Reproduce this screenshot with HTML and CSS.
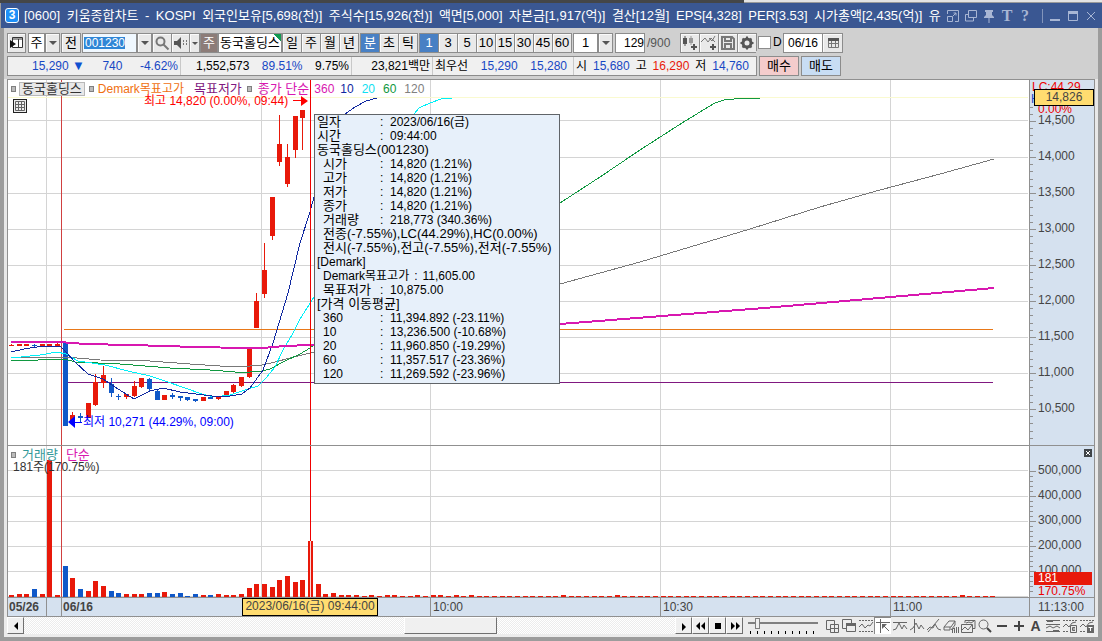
FILE: index.html
```html
<!DOCTYPE html>
<html lang="ko">
<head>
<meta charset="utf-8">
<title>[0600] 키움종합차트</title>
<link rel="stylesheet" href="styles.css">
</head>
<body>
<div class="backdrop"><i class="backdrop-dark"></i><i class="backdrop-light"></i></div>
<div class="window">
<header class="titlebar">
  <span class="app-badge">3</span>
  <h1 class="title"><span>[0600]</span><span>키움종합차트</span><span>-</span><span>KOSPI</span><span>외국인보유[5,698(천)]</span><span>주식수[15,926(천)]</span><span>액면[5,000]</span><span>자본금[1,917(억)]</span><span>결산[12월]</span><span>EPS[4,328]</span><span>PER[3.53]</span><span>시가총액[2,435(억)]</span><span>유</span></h1>
  <div class="win-tools">
    <button aria-label="화면 복귀"><svg viewBox="0 0 14 14"><path d="M1.500 5V1.500h11v11H9M1.500 7.500h5v5h-5zM7 7l3-3M7.500 4H10v2.500"/></svg></button>
    <button aria-label="화면 복사"><svg viewBox="0 0 14 14"><path d="M4.500 1.500h8v7h-8zM4 5.500H1.500v6.500h8V9"/></svg></button>
    <button aria-label="고정"><svg viewBox="0 0 14 14"><path class="fill" d="M3 1h8v2h-1v3l2 2v1H2V8l2-2V3H3zM6.500 9h1v5h-1z"/></svg></button>
    <button class="serif">T</button>
    <button class="serif">?</button>
    <i class="win-sep"></i>
    <button aria-label="최소화"><svg viewBox="0 0 14 14"><path class="fill" d="M2 10h10v2H2z"/></svg></button>
    <button aria-label="최대화"><svg viewBox="0 0 14 14"><path d="M2.500 3.500h9v8h-9z"/><path class="fill" d="M2 2h10v3H2z"/></svg></button>
    <button aria-label="닫기"><svg viewBox="0 0 14 14"><path d="M3 3l8 8M11 3l-8 8"/></svg></button>
  </div>
</header>

<nav class="toolbar">
  <button class="btn gap-r" aria-label="목록"><svg viewBox="0 0 18 18"><path class="sw" d="M4.500 3.500h10v10h-10zM4 5h11M10.500 5v9"/><path class="k" d="M2 6l6 4-6 4z"/></svg></button>
  <button class="field drop w17">주</button><button class="btn arrow w15" aria-label="종류 선택"></button>
  <button class="btn gap-x">전</button>
  <input class="field code" aria-label="종목코드" value="001230"><button class="btn arrow w15" aria-label="종목 목록"></button>
  <button class="btn" aria-label="검색"><svg viewBox="0 0 18 18"><circle class="g" cx="7.500" cy="7.500" r="4"/><path class="g" d="M10.500 10.500l5 5"/></svg></button>
  <button class="btn w18" aria-label="소리"><svg viewBox="0 0 18 18"><path class="dk" d="M2 7h3l4-4v12l-4-4H2z"/><path class="g dots" d="M11.500 6v6M14.500 6v6"/></svg></button><button class="btn arrow w11" aria-label="소리 옵션"></button>
  <span class="tag">주</span><span class="stock">동국홀딩스</span>
  <button class="btn">일</button><button class="btn">주</button><button class="btn">월</button><button class="btn w20">년</button>
  <button class="btn on gap-l">분</button><button class="btn">초</button><button class="btn w20">틱</button>
  <button class="btn on gap-l">1</button><button class="btn">3</button><button class="btn">5</button><button class="btn">10</button><button class="btn">15</button><button class="btn">30</button><button class="btn">45</button><button class="btn w20">60</button>
  <button class="field drop w25 gap-l">1</button><button class="btn arrow w15" aria-label="주기 선택"></button>
  <input class="field count" aria-label="조회 개수" value="129"><span class="total">/900</span>
  <button class="btn" aria-label="봉 추가"><svg viewBox="0 0 18 18"><path class="dk" d="M2 4h4v6H2zM3.500 2h1v10h-1zM12 10h2v2h2v2h-2v2h-2v-2h-2v-2h2z"/><path class="lt" d="M8 4h4v5H8zM9.500 2h1v9h-1z"/></svg></button>
  <button class="btn" aria-label="지표 추가"><svg viewBox="0 0 18 18"><path class="g thin" d="M1 8l4-4 3 4 3-4 4 4M9 4l3 3 3-5"/><path class="dk" d="M12 10h2v2h2v2h-2v2h-2v-2h-2v-2h2z"/></svg></button>
  <button class="btn" aria-label="저장"><svg viewBox="0 0 18 18"><path class="g" d="M3 3h10l2 2v10H3zM6 3v4h6V3M6 15v-5h6v5"/></svg></button>
  <button class="btn" aria-label="설정"><svg viewBox="0 0 18 18"><circle class="gear" cx="9" cy="9" r="4"/><path class="g teeth" d="M9 2.500v2M9 13.500v2M2.500 9h2M13.500 9h2M4.500 4.500l1.500 1.500M12 12l1.500 1.500M4.500 13.500L6 12M12 6l1.500-1.500"/></svg></button>
  <label class="check"><input type="checkbox">D</label>
  <input class="field date" aria-label="날짜" value="06/16"><button class="btn" aria-label="달력"><svg viewBox="0 0 18 18"><path class="g thin" d="M4.500 5.500h10v8h-10zM7.500 5v9M11.500 5v9M4 9.500h10"/><path class="dk" d="M4 4h11v3H4z"/></svg></button>
</nav>

<section class="quote-row">
  <div class="quote">
    <div class="cell c1"><span class="blue">15,290 <b class="down">▼</b></span><span class="blue">740</span><span class="blue">-4.62%</span></div>
    <div class="cell c2"><span>1,552,573</span><span class="blue">89.51%</span><span>9.75%</span></div>
    <div class="cell c3"><span>23,821백만</span></div>
    <div class="cell c4"><span>최우선</span><span class="blue">15,290</span><span class="blue">15,280</span></div>
    <div class="cell c5"><span>시</span><span class="blue">15,680</span><span>고</span><span class="red">16,290</span><span>저</span><span class="blue">14,760</span></div>
  </div>
  <button class="trade buy">매수</button>
  <button class="trade sell">매도</button>
</section>

<main class="chart">
  <section class="pane price">
    <svg id="price" viewBox="8 80 1021 365" preserveAspectRatio="none" aria-label="가격 차트"></svg>
    <div class="legend">
      <i class="mark"></i><span class="chip">동국홀딩스</span><i class="mark"></i>
      <span class="l-orange">Demark목표고가</span><span class="l-purple">목표저가</span><i class="mark"></i>
      <span class="l-magenta">종가 단순</span><span class="l-magenta w18">360</span><span class="l-navy">10</span><span class="l-cyan">20</span><span class="l-green">60</span><span class="l-gray">120</span>
    </div>
    <button class="grid-btn" aria-label="표 보기"><svg viewBox="0 0 12 12"><path d="M1.500 1.500h9v9h-9zM4.500 1v10M7.500 1v10M1 4.500h10M1 7.500h10"/></svg></button>
    <div class="note high">최고 14,820 (0.00%, 09:44)<svg viewBox="0 0 15 10"><path d="M0 4.500h10" stroke="#f00"/><path d="M8 0l7 5-7 5z" fill="#f00"/></svg></div>
    <div class="note low"><svg viewBox="0 0 14 12"><path d="M5 6.500h9" stroke="#00f"/><path d="M7 0v12L0 6z" fill="#00f"/></svg>최저 10,271 (44.29%, 09:00)</div>
    <div class="tip">
      <div class="pair"><span>일자</span><span>:</span><span>2023/06/16(금)</span></div>
      <div class="pair"><span>시간</span><span>:</span><span>09:44:00</span></div>
      <div class="wide">동국홀딩스(001230)</div>
      <div class="pair in"><span>시가</span><span>:</span><span>14,820 (1.21%)</span></div>
      <div class="pair in"><span>고가</span><span>:</span><span>14,820 (1.21%)</span></div>
      <div class="pair in"><span>저가</span><span>:</span><span>14,820 (1.21%)</span></div>
      <div class="pair in"><span>종가</span><span>:</span><span>14,820 (1.21%)</span></div>
      <div class="pair in"><span>거래량</span><span>:</span><span>218,773 (340.36%)</span></div>
      <div class="in wide">전종(-7.55%),LC(44.29%),HC(0.00%)</div>
      <div class="in wide">전시(-7.55%),전고(-7.55%),전저(-7.55%)</div>
      <div>[Demark]</div>
      <div class="in demark"><span>Demark목표고가</span><span>:</span><span>11,605.00</span></div>
      <div class="pair in"><span>목표저가</span><span>:</span><span>10,875.00</span></div>
      <div class="wide">[가격 이동평균]</div>
      <div class="pair num in"><span>360</span><span>:</span><span>11,394.892 (-23.11%)</span></div>
      <div class="pair num in"><span>10</span><span>:</span><span>13,236.500 (-10.68%)</span></div>
      <div class="pair num in"><span>20</span><span>:</span><span>11,960.850 (-19.29%)</span></div>
      <div class="pair num in"><span>60</span><span>:</span><span>11,357.517 (-23.36%)</span></div>
      <div class="pair num in"><span>120</span><span>:</span><span>11,269.592 (-23.96%)</span></div>
    </div>
  </section>
  <aside class="axis" id="price-axis">
    <span class="lc">LC:44.29</span><span class="hc">H</span><span class="pct">0.00%</span><span class="now">14,826</span>
  </aside>
  <section class="pane volume">
    <svg id="volume" viewBox="8 446 1021 151" preserveAspectRatio="none" aria-label="거래량 차트"></svg>
    <div class="legend"><i class="mark"></i><span class="l-teal">거래량</span><span class="l-magenta">단순</span></div>
    <div class="vol-now">181주(170.75%)</div>
  </section>
  <aside class="axis" id="volume-axis">
    <button class="pane-close" aria-label="닫기"><svg viewBox="0 0 8 8"><path d="M2 2l4 4M6 2L2 6"/></svg></button>
    <span class="vol-box">181</span><span class="vol-pct">170.75%</span>
  </aside>
  <div class="times" id="times"><span class="cursor-time">2023/06/16(금) 09:44:00</span></div>
  <div class="last-time">11:13:00</div>
</main>

<footer class="bottom">
  <button class="raised" aria-label="왼쪽으로"><svg viewBox="0 0 14 14"><path d="M9 3v8L5 7z"/></svg></button>
  <div class="track"><div class="thumb"></div></div>
  <button class="raised" aria-label="재생"><svg viewBox="0 0 14 14"><path d="M5 4v8l4-4z"/></svg></button>
  <button class="raised" aria-label="뒤로"><svg viewBox="0 0 14 14"><path d="M6 3v8L2 7zM11 3v8L7 7z"/></svg></button>
  <button class="raised" aria-label="정지"><svg viewBox="0 0 14 14"><path d="M4 4h6v6H4z"/></svg></button>
  <button class="raised" aria-label="앞으로"><svg viewBox="0 0 14 14"><path d="M3 3v8l4-4zM8 3v8l4-4z"/></svg></button>
  <input class="speed" type="range" min="0" max="9" value="1" aria-label="속도">
  <div class="tools">
    <button aria-label="창 추가"><svg viewBox="0 0 16 16"><path d="M6 11.500H2.500v-9h8V6M6.500 6.500h8v8h-8zM10.500 6v9M6 10.500h9"/></svg></button>
    <button aria-label="창 겹침"><svg viewBox="0 0 16 16"><path d="M5 10.500H1.500v-9h9V5M5.500 6.500h9v7h-9z"/><path class="f" d="M5 5h10v3H5z"/></svg></button>
    <button aria-label="추세"><svg viewBox="0 0 16 16"><path stroke-dasharray="2 1" d="M1 2.500h14M1 13.500h14"/><path d="M1 9l3-3 3 4 3-3 2 1 3-4"/></svg></button>
    <button class="active" aria-label="선택"><svg viewBox="0 0 16 16"><path d="M1 4.500h14M5.500 1v14M9 8l5 5"/><path class="f" d="M7 6h5l-5 5z"/></svg></button>
    <button aria-label="수평선"><svg viewBox="0 0 16 16"><path d="M1 4.500h14M1 12l3-1 3-6 3 6 2-4 3 4"/></svg></button>
    <button aria-label="수직선"><svg viewBox="0 0 16 16"><path d="M5.500 1v14M1 12l3-2 3-5 3 6 2-4 3 4"/></svg></button>
    <button aria-label="추세선"><svg viewBox="0 0 16 16"><path d="M2 14L13 1M1 12l3-3 3 1 2-4 3 5 3 1"/></svg></button>
    <button aria-label="모두 지우기"><svg viewBox="0 0 16 16"><path d="M1 9l5-6h6l-4 6zM1 9v3h6V9M8 12l4-5V3M9.500 15v-4l2-1v5M13.500 9v6M15.500 9v6"/></svg></button>
    <button aria-label="차트 복사"><svg viewBox="0 0 16 16"><path d="M5 5V2.500h10v8h-2M1.500 6.500h11v8h-11zM2 12l3-3 3 3 4-5M6 5l3-1 2 1 3-2"/></svg></button>
    <button aria-label="돋보기"><svg viewBox="0 0 16 16"><circle cx="6.500" cy="6.500" r="4.500"/><path class="w2" d="M10 10l4 4"/></svg></button>
    <button aria-label="축소"><svg viewBox="0 0 16 16"><path class="w2" d="M3 8h10"/></svg></button>
    <button aria-label="확대"><svg viewBox="0 0 16 16"><path class="w2" d="M3 8h10M8 3v10"/></svg></button>
    <button class="letter">A</button>
    <button aria-label="지표 목록"><svg viewBox="0 0 16 16"><path d="M1 2.500h14M1 6.500h14M1 13.500h14M1 10l4-2 3 2 4-2 3 2"/><path class="f" d="M2 2h6v2H2zM8 12h6v2H8z"/></svg></button>
    <button aria-label="지표 편집"><svg viewBox="0 0 16 16"><path stroke-dasharray="2 1" d="M1 2.500h14M1 13.500h6"/><path d="M1 9l3-3 3 3 3-4 4-1M8.500 7.500h6v7h-6zM13 9.500h-2.500v3H13M10.500 11H13"/></svg></button>
    <button aria-label="문자 도구"><svg viewBox="0 0 16 16"><path stroke-dasharray="2 1" d="M1 2.500h14M1 13.500h6"/><path d="M1 9l3-3 3 3 3-4 4-1"/><path class="f" d="M8 7h7v8H8z"/><path class="wh" d="M9.500 9.500h4M11.500 9v4"/></svg></button>
  </div>
</footer>
</div>
<script src="chart.js"></script>
</body>
</html>
```

FILE: styles.css
```css
* { box-sizing: border-box; }
body { margin: 0; font: 12px/14px "Liberation Sans", "Noto Sans CJK KR", sans-serif; color: #000; background: #d0d0d0; min-height: 100vh; display: flex; flex-direction: column; }
button, input { font: inherit; color: inherit; padding: 0; margin: 0; border-radius: 0; }
button { border: 0; background: none; display: flex; align-items: center; justify-content: center; }
svg { display: block; flex: none; }
.blue { color: #1747c4; }
.red { color: #e8190a; }
.backdrop { display: flex; height: 3px; }
.backdrop-dark { flex: 744; background: #444648; }
.backdrop-light { flex: 358; background: #e4e4e4; border-bottom: 1px solid #9a9a9a; }
.window { flex: 1; display: flex; flex-direction: column; border: solid #9c9c9c; border-width: 0 4px 4px; }

.titlebar { height: 25px; margin: 0 -4px 0 -3px; padding: 0 4px; background: #3a5792; display: flex; align-items: center; gap: 5px; color: #fff; }
.app-badge { flex: none; width: 14px; height: 15px; border: 1px solid #fff; border-radius: 3px; background: #1e90f8; font-weight: bold; line-height: 13px; text-align: center; }
.title { flex: 1; min-width: 0; margin: 0; display: flex; justify-content: space-between; overflow: hidden; font-size: 13px; line-height: 16px; font-weight: normal; white-space: nowrap; }
.win-tools { display: flex; flex: none; align-items: center; gap: 4px; color: #b8c4dc; }
.win-tools button { width: 14px; height: 16px; }
.win-tools svg { width: 14px; height: 14px; fill: none; stroke: #a8b6d4; }
.win-tools .fill { fill: #a8b6d4; stroke: none; }
.win-tools .serif { font: bold 16px/16px "Liberation Serif", serif; color: #a8b6d4; }
.win-sep { width: 1px; height: 14px; background: #8294bb; margin: 0 1px 0 6px; }

.toolbar { display: flex; height: 25px; padding: 5px 3px 0; font-size: 13px; }
.btn { flex: none; width: 19px; height: 20px; border: 1px solid #8c8c8c; border-right-width: 0; background: #e9e9e9; box-shadow: inset 1px 1px #fafafa; }
.btn svg { width: 18px; height: 18px; fill: none; }
.btn.on { background: #4880c4; color: #fff; box-shadow: none; }
.toolbar .w20 { width: 20px; border-right-width: 1px; }
.w18 { width: 18px; }
.w17 { width: 17px; }
.w15 { width: 15px; border-right-width: 1px; }
.w11 { width: 11px; border-right-width: 1px; }
.w25 { width: 25px; }
.gap-r { margin-right: 2px; border-right-width: 1px; }
.gap-l { margin-left: 1px; }
.gap-x { width: 20px; margin: 0 1px; border-right-width: 1px; }
.arrow::after { content: ""; border: 4px solid transparent; border-top-color: #555; border-bottom: 0; }
.w11.arrow::after { border-width: 3px 3px 0; }
.field { flex: none; height: 20px; border: 1px solid #8c8c8c; background: #fff; text-align: center; }
.code { width: 55px; padding: 0 2px; background: #f0f8ff linear-gradient(#2f86d6, #2f86d6) 1px 3px / 41px 12px no-repeat; color: #fff; text-align: left; font-size: 12px; }
.tag { flex: none; width: 18px; height: 20px; border: 1px solid #8c8c8c; background: #8c7c78; color: #fff; text-align: center; line-height: 18px; }
.stock { flex: none; width: 64px; height: 20px; padding-left: 1px; border: 1px solid #8c8c8c; background: #fff linear-gradient(45deg, transparent 50%, #109a50 50%) right top / 8px 8px no-repeat; line-height: 18px; white-space: nowrap; overflow: hidden; }
.count { width: 30px; margin-left: 2px; font-size: 12px; text-align: right; }
.total { width: 35px; color: #555; font-size: 12px; line-height: 20px; padding-left: 2px; }
.check { display: flex; align-items: center; gap: 2px; width: 27px; height: 18px; border-left: 1px solid #8c8c8c; padding-left: 1px; font-size: 12px; }
.check input { appearance: none; width: 13px; height: 13px; background: #fff; border: 1px solid #8c8c8c; }
.date { width: 40px; font-size: 12px; }
.date + .btn { width: 20px; border-left-width: 0; border-right-width: 1px; }
.sw { fill: #fff; stroke: #333; }
.k { fill: #111; }
.g { stroke: #777; stroke-width: 2; }
.g.thin { stroke-width: 1; }
.dots { stroke-dasharray: 2 1; stroke-width: 1; }
.dk { fill: #555; }
.lt { fill: #999; }
.gear { stroke: #555; stroke-width: 3; }
.teeth { stroke: #555; }

.quote-row { display: flex; gap: 2px; padding: 3px 3px 2px; height: 26px; }
.quote { display: flex; flex: none; width: 750px; border: 1px solid #8c8c8c; background: #f0f0f0; line-height: 18px; height: 20px; }
.cell { display: flex; justify-content: space-between; border-right: 1px solid #c8c8c8; padding: 0 2px; white-space: nowrap; }
.cell:last-child { border: 0; }
.c1 { width: 173px; padding-left: 24px; }
.c2 { width: 171px; padding-left: 15px; }
.c3 { width: 81px; justify-content: flex-end; }
.c4 { width: 141px; padding: 0 6px 0 2px; }
.c5 { width: 182px; padding-right: 7px; }
.down { font-size: 13px; color: #1050d0; }
.trade { flex: none; width: 40px; height: 20px; border: 1px solid #8c8c8c; font-size: 13px; }
.buy { background: #f4cccc; }
.sell { background: #c8ddf4; }

.chart { flex: 1; display: grid; grid-template: 366fr 152fr 20px / 1fr 66px; padding: 0 3px; background: #e8e8e8; color: #444; }
.pane, .axis, .times, .last-time { border-left: 1px solid #909090; position: relative; min-width: 0; min-height: 0; }
.price, #price-axis { border-top: 1px solid #909090; }
.axis, .last-time { background: #d5e1ef; border-right: 1px solid #909090; }
.pane { background: #fff; }
.pane > svg { width: 100%; height: 100%; position: absolute; left: 0; top: 0; }
.volume, #volume-axis { border-top: 1px solid #909090; }
.legend { position: relative; display: flex; align-items: center; gap: 8px; height: 16px; padding: 1px 3px 0; white-space: nowrap; font-size: 13px; }
.mark { width: 5px; height: 6px; border: 1px solid #808080; background: #bbb; }
.mark + .chip { margin-left: -5px; }
.chip { height: 14px; padding: 0 2px; border: 1px solid #b8b8b8; background: #e8e8e8; line-height: 12px; color: #333; }
.chip + .mark { margin-left: -4px; }
.l-purple + .mark { margin-left: -3px; }
.mark + .l-orange { margin-left: -4px; }
.mark + .l-magenta, .mark + .l-teal { margin-left: -2px; }
.l-orange { color: #f07010; font-size: 12px; }
.l-purple { color: #801880; }
.l-magenta { color: #d818b0; }
.l-navy { color: #1028a0; }
.l-cyan { color: #10e0f0; }
.l-green { color: #109840; }
.l-gray { color: #808080; }
.l-teal { color: #309898; }
.l-orange + .l-purple { margin-left: 2px; }
.l-magenta.w18 { margin-left: -3px; }
.l-magenta.w18, .l-navy, .l-cyan, .l-green, .l-gray { font-size: 12px; }
.grid-btn { position: absolute; left: 5px; top: 19px; width: 14px; height: 14px; border: 1px solid #222; background: #eee; }
.grid-btn svg { width: 12px; height: 12px; fill: none; stroke: #666; }
.note { position: absolute; display: flex; align-items: center; gap: 5px; white-space: nowrap; }
.note.high { left: 136px; top: 14px; color: #f00; }
.note.low { left: 60px; top: 335px; color: #00f; gap: 1px; }
.high svg { width: 15px; height: 10px; }
.low svg { width: 14px; height: 12px; }
.tip { position: absolute; left: 306px; top: 34px; width: 246px; height: 270px; padding: 0 2px; border: 1px solid #606468; background: #e7f0fa; color: #000; white-space: nowrap; }
.pair { display: grid; grid-template-columns: 63px 10px 1fr; }
.pair > :first-child, .wide { font-size: 13px; }
.pair.num > :first-child { font-size: 12px; }
.in { padding-left: 6px; }
.pair.in { grid-template-columns: 57px 10px 1fr; }
.demark { display: flex; gap: 5px; }
.tick { position: absolute; left: 0; width: 3px; height: 1px; background: #909090; }
.tick.major { width: 6px; }
.tick-label { position: absolute; left: 8px; margin-top: -8px; }
.lc, .hc, .pct, .now, .vol-box, .vol-pct { position: absolute; z-index: 1; }
.lc { left: 2px; top: 0; color: #e00; }
.hc { left: 1px; top: 12px; color: #1747c4; }
.pct { left: 8px; top: 24px; height: 10px; line-height: 10px; background: #d5e1ef; color: #e00; }
.now { left: 4px; top: 9px; width: 60px; height: 17px; border: 1px solid #000; background: #ffdc70; line-height: 15px; text-align: center; }
.pane-close { position: absolute; right: 2px; top: 3px; width: 8px; height: 8px; background: #404448; }
.pane-close svg { width: 8px; height: 8px; stroke: #fff; }
.vol-box { left: 4px; right: 2px; bottom: 12px; height: 13px; padding-left: 4px; background: #e8190a; color: #fff; line-height: 13px; }
.vol-pct { left: 8px; bottom: 0; height: 12px; line-height: 12px; color: #e00; }
.vol-now { position: absolute; left: 5px; top: 14px; color: #333; }
.times, .last-time { background: #d5e1ef; border-top: 1px solid #909090; border-bottom: 1px solid #909090; }
.last-time { padding: 2px 0 0 8px; }
.time { position: absolute; top: 0; height: 18px; border-left: 1px solid #909090; padding: 2px 0 0 2px; }
.time.strong { font-weight: bold; padding-left: 1px; }
.time.first { border: 0; }
.cursor-time { position: absolute; z-index: 1; left: 234px; top: 0; width: 136px; height: 18px; border: 1px solid #000; background: #ffdc70; line-height: 15px; text-align: center; white-space: nowrap; }

.bottom { display: flex; height: 20px; padding: 0 3px 3px; background: #ececec; }
.raised { flex: none; width: 17px; height: 17px; background: #f0f0f0; border: 1px solid; border-color: #fff #707070 #707070 #fff; }
.raised svg { width: 14px; height: 14px; }
.track { flex: 1; padding-left: 380px; background: repeating-conic-gradient(#fff 0 25%, #ececec 0 50%) 0 0 / 2px 2px; }
.thumb { width: 93px; height: 17px; background: #f0f0f0; border: 1px solid; border-color: #fff #707070 #707070 #fff; }
.speed { appearance: none; flex: none; width: 70px; height: 17px; margin: 0 5px; background: linear-gradient(#808080, #808080) 0 5px / 100% 2px no-repeat, repeating-linear-gradient(90deg, #000 0 1px, transparent 1px 7px) 2px 14px / 68px 3px no-repeat; }
.speed::-webkit-slider-thumb { appearance: none; width: 5px; height: 11px; margin-top: -5px; border: 1px solid #808080; background: #f0f0f0; }
.tools { display: flex; flex: none; width: 272px; justify-content: space-between; }
.tools button { width: 17px; height: 17px; }
.tools .active { background: #fff; border-left: 1px solid #888; border-top: 1px solid #888; }
.tools svg { width: 16px; height: 16px; fill: none; stroke: #666; }
.tools .f { fill: #666; stroke: none; }
.tools .w2 { stroke-width: 2; stroke: #444; }
.tools .wh { stroke: #fff; }
.tools .letter { font-weight: bold; font-size: 14px; color: #444; }
```

FILE: chart.js
```js
const RED = '#e8190a', BLUE = '#1058c8', GRID = '#d4d4d4';
const PITCH = 23 / 3;
const left = i => Math.round(9 + i * PITCH);
const rect = (x, y, w, h, c) => `<rect x="${x}" y="${y}" width="${w}" height="${h}" fill="${c}"/>`;
const line = (pts, c, w = 1) => `<polyline points="${pts}" fill="none" stroke="${c}" stroke-width="${w}" shape-rendering="crispEdges"/>`;
const gridX = [46, 261, 430, 660, 890];

// [index, colour, body top, body bottom, wick top, wick bottom]
const candles = [
  [0,'r',345,346,344,346],[1,'r',344,346,344,346],[2,'r',344,346,344,346],[3,'b',345,346,344,347],
  [4,'r',344,346,344,346],[5,'r',344,346,344,346],[6,'r',344,346,343,346],
  [7,'b',343,426,343,426],[8,'r',415,421,412,421],[9,'b',416,418,413,423],[10,'r',403,418,403,418],
  [11,'r',382,405,374,406],[12,'r',375,383,366,388],[13,'b',384,393,378,397],[14,'b',396,397,394,400],
  [15,'r',394,397,394,399],[16,'r',386,396,381,397],[17,'r',378,387,378,388],[18,'b',379,389,378,391],
  [19,'b',391,400,389,400],[20,'r',395,400,395,400],[21,'b',395,397,393,399],[22,'b',396,398,396,401],
  [23,'b',397,400,397,401],[24,'b',399,401,399,402],[25,'r',397,401,397,401],[26,'b',397,399,395,399],
  [27,'r',396,399,396,400],[28,'r',391,397,391,397],[29,'r',385,392,384,393],[30,'r',377,386,377,387],
  [31,'r',347,377,347,378],[32,'r',301,328,293,328],[33,'r',270,294,243,298],[34,'r',197,236,197,240],
  [35,'r',144,162,115,166],[36,'r',157,184,144,187],[37,'r',116,150,116,158],[38,'r',110,118,110,150]
];

let s = '';
[120,157,193,229,265,301,337,373,409].forEach(y => s += rect(8, y, 1020, 1, GRID));
gridX.forEach(x => s += rect(x, 80, 1, 365, GRID));
s += rect(8, 97, 1020, 1, '#fafad0');
s += rect(61, 80, 1, 365, '#d04040');
s += rect(64, 329, 929, 1, '#e87818') + rect(67, 382, 926, 1, '#801880');
candles.forEach(([i, k, t, b, wt, wb]) => {
  const c = k === 'r' ? RED : BLUE, x = left(i);
  s += rect(x, t, 5, b - t, c) + rect(x + 2, wt, 1, wb - wt, c);
});
s += line('11,357 66,357 100,360 150,361 190,364 220,366 250,366 262,365 275,362 290,358 314,352 560,284 640,262 750,229 820,207 880,190 940,174 994,159', '#787878');
s += line('11,361 65,359 75,362 120,364 170,368 210,370 235,372 250,372 262,371 270,369 285,361 300,354 310,348 314,345 560,203 600,177 640,150 682,123 700,112 715,103 724,100 734,99 743,98 760,98', '#109840');
s += line('11,358 40,355 57,352 66,354 78,361 105,365 128,371 150,376 165,381 185,388 202,394 214,397 230,395 248,389 258,386 266,378 275,367 283,350 292,335 300,319 314,297 400,150 414,114 419,108 430,103 444,98 452,98', '#00f0f8');
s += line('11,352 24,349 43,346 60,346 66,352 75,362 88,374 103,379 115,387 126,394 134,399 150,391 163,388 180,392 212,396 224,397 242,394 250,388 263,370 273,343 288,293 300,243 310,212 314,197 335,130 345,114 355,107 366,101 377,98', '#1028a0');
s += line('11,342 60,342 85,344 130,345 165,346 195,347 245,348 262,348 285,346 310,345 560,324 764,308 994,288', '#d818b0', 2);
s += rect(310, 80, 1, 365, '#f00000');
document.getElementById('price').innerHTML = s;

// bar tops for the first 49 minutes; later minutes are one pixel high unless listed in `taller`
const tops = [595,594,594,589,594,460,595,566,578,589,591,581,586,591,593,594,594,594,593,593,592,594,593,596,594,595,595,594,595,595,594,588,584,584,587,580,576,582,580,541,584,594,593,595,595,595,596,595,596];
const blues = new Set([3,7,9,13,14,18,19,21,22,23,24,26]);
const taller = new Set([49,50,53,55,56,58,60,72,79,124]);
s = '';
[470,496,521,546,571,596].forEach(y => s += rect(8, y, 1020, 1, GRID));
gridX.forEach(x => s += rect(x, 446, 1, 151, GRID));
for (let i = 0; i < 129; i++) {
  const t = i < tops.length ? tops[i] : taller.has(i) ? 595 : 596;
  s += rect(left(i), t, 5, 597 - t, blues.has(i) ? BLUE : RED);
}
s += rect(61, 446, 1, 151, '#d04040') + rect(310, 446, 1, 95, '#f00000') + rect(310, 541, 1, 56, '#f8d8d8');
document.getElementById('volume').innerHTML = s;

function axis(id, top, height, first, step, minor, labels) {
  let h = '';
  const pos = y => `style="top:${(y - top) / height * 100}%"`;
  for (let y = first - Math.floor((first - top - 26) / minor) * minor; y < top + height - 4; y += minor) h += `<i class="tick" ${pos(y)}></i>`;
  labels.forEach((l, n) => {
    const y = first + n * step;
    h += `<i class="tick major" ${pos(y)}></i><span class="tick-label" ${pos(y)}>${l}</span>`;
  });
  document.getElementById(id).insertAdjacentHTML('afterbegin', h);
}
axis('price-axis', 80, 365, 121, 36, 7.2, ['14,500','14,000','13,500','13,000','12,500','12,000','11,500','11,000','10,500']);
axis('volume-axis', 446, 151, 471, 25, 5, ['500,000','400,000','300,000','200,000','100,000']);

const times = [[8,'05/26','strong first'],[46,'',''],[61,'06/16','strong'],[430,'10:00',''],[660,'10:30',''],[890,'11:00','']];
document.getElementById('times').insertAdjacentHTML('afterbegin', times.map(([x, t, c]) =>
  `<span class="time ${c}" style="left:${(x - 8) / 1021 * 100}%">${t}</span>`).join(''));
```
